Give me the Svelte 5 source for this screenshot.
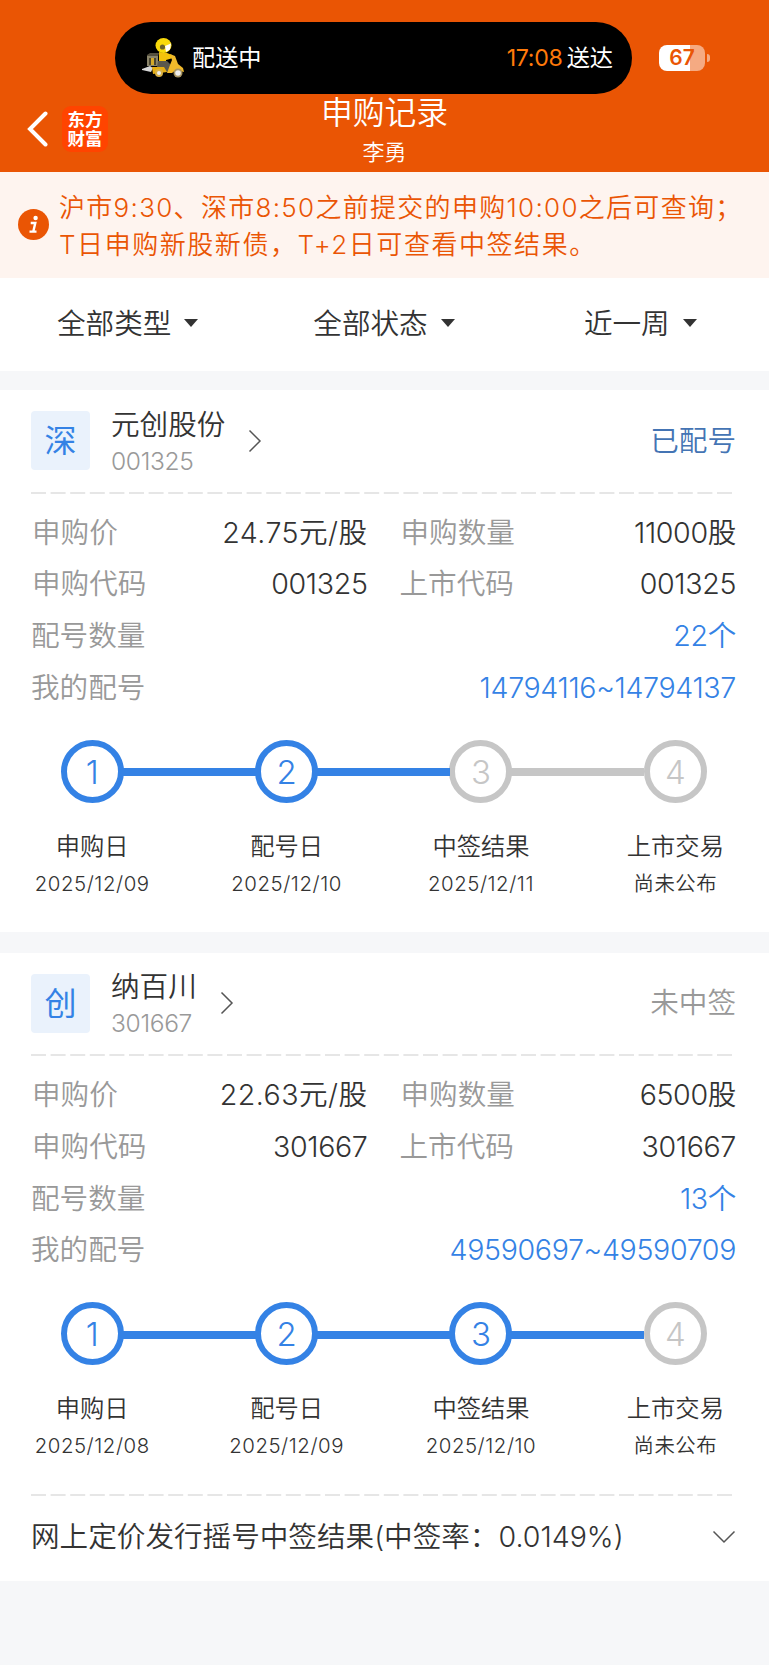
<script lang="ts">
  interface Step {
    title: string;
    date: string;
    done: boolean;
  }

  interface Subscription {
    market: string;
    name: string;
    code: string;
    status: string;
    allotted: boolean;
    price: string;
    quantity: string;
    count: string;
    numbers: string;
    steps: Step[];
    result?: string;
  }

  const filters = ['全部类型', '全部状态', '近一周'];

  const records: Subscription[] = [
    {
      market: '深',
      name: '元创股份',
      code: '001325',
      status: '已配号',
      allotted: true,
      price: '24.75元/股',
      quantity: '11000股',
      count: '22个',
      numbers: '14794116~14794137',
      steps: [
        { title: '申购日', date: '2025/12/09', done: true },
        { title: '配号日', date: '2025/12/10', done: true },
        { title: '中签结果', date: '2025/12/11', done: false },
        { title: '上市交易', date: '尚未公布', done: false },
      ],
    },
    {
      market: '创',
      name: '纳百川',
      code: '301667',
      status: '未中签',
      allotted: false,
      price: '22.63元/股',
      quantity: '6500股',
      count: '13个',
      numbers: '49590697~49590709',
      steps: [
        { title: '申购日', date: '2025/12/08', done: true },
        { title: '配号日', date: '2025/12/09', done: true },
        { title: '中签结果', date: '2025/12/10', done: true },
        { title: '上市交易', date: '尚未公布', done: false },
      ],
      result: '网上定价发行摇号中签结果(中签率：0.0149%)',
    },
  ];
</script>

{#snippet dashes()}
  <svg class="dashes" width="704" height="2" viewBox="0 0 704 2">
    <line x1="0" y1="1" x2="701" y2="1" stroke="#dedede" stroke-width="1.3" stroke-dasharray="15 4.6" />
  </svg>
{/snippet}

<header>
  <div class="status-bar">
    <div class="island">
      <svg class="rider" width="42" height="40" viewBox="0 0 42 40">
        <path d="M0 31l8-3 3 2-2 4-9-2z" fill="#d8d8d8" />
        <path d="M5 17l3-2h9l-1 3v10H5z" fill="#55503f" />
        <path d="M5 18h11v10H5z" fill="#8a846a" />
        <path d="M7 20h7v7H7z" fill="#4a4532" />
        <path d="M9 20h3v7H9z" fill="#d3a92a" />
        <path d="M17 14l8 1 5 2 1 3-7 2v3l-7-1z" fill="#f3c20c" />
        <path d="M16 23l9 0 4 4 1 8-6-1-3-4-6-1z" fill="#5b584c" />
        <path d="M10 29h12l3 5-14 2z" fill="#e5ae13" />
        <path d="M28 16l5 2 3 8 5 4 1 4-8-2-4 3-5 0 3-8 2-5z" fill="#f0b92b" />
        <circle cx="17" cy="35" r="4" fill="#d9b145" />
        <circle cx="17" cy="35" r="2" fill="#eee" />
        <circle cx="36" cy="35" r="4.5" fill="#a89563" />
        <circle cx="36" cy="35" r="2.8" fill="#eee" />
        <ellipse cx="21.5" cy="7.5" rx="8" ry="7.5" fill="#f8d90b" />
        <path d="M23 8l6-2.5-1 6-4 2.5z" fill="#fff" />
        <circle cx="20.5" cy="9" r="2.6" fill="#6b602a" />
      </svg>
      <span class="island-state">配送中</span>
      <span class="island-time">17:08</span>
      <span class="island-label">送达</span>
    </div>
    <div class="battery">
      <div class="battery-body">67</div>
      <div class="battery-cap"></div>
    </div>
  </div>
  <div class="nav">
    <div class="nav-left">
      <svg width="21" height="36" viewBox="0 0 21 36">
        <path d="M18.5 2.5L3 18l15.5 15.5" fill="none" stroke="#fff" stroke-width="4" stroke-linecap="round" />
      </svg>
      <div class="logo">
        <span>东方</span>
        <span>财富</span>
      </div>
    </div>
    <div class="nav-title">
      <h1>申购记录</h1>
      <p>李勇</p>
    </div>
  </div>
</header>

<div class="notice">
  <svg width="31" height="31" viewBox="0 0 31 31">
    <circle cx="15.5" cy="15.5" r="15.5" fill="#ea5504" />
    <circle cx="17.6" cy="9" r="2.2" fill="#fff" />
    <path d="M12.7 14h4.6l-2 8.5M11.5 22.6h7" fill="none" stroke="#fff" stroke-width="2.4" />
  </svg>
  <div class="notice-text">
    <p>沪市9:30、深市8:50之前提交的申购10:00之后可查询；</p>
    <p class="second">T日申购新股新债，T+2日可查看中签结果。</p>
  </div>
</div>

<nav class="filters">
  {#each filters as filter}
    <div class="filter"><span>{filter}</span><span class="caret"></span></div>
  {/each}
</nav>

{#each records as record}
  <section class="card">
    <div class="card-head">
      <div class="market">{record.market}</div>
      <div class="stock">
        <h2>{record.name}</h2>
        <span>{record.code}</span>
      </div>
      <svg class="go" width="14" height="24" viewBox="0 0 14 24">
        <path d="M1.5 1.5L12 12 1.5 22.5" fill="none" stroke="#555" stroke-width="1.5" />
      </svg>
      <div class="status" class:allotted={record.allotted}>{record.status}</div>
    </div>
    {@render dashes()}

    <dl class="details">
      <div><dt class="inset">申购价</dt><dd class="price">{record.price}</dd></div>
      <div><dt class="inset">申购数量</dt><dd>{record.quantity}</dd></div>
      <div><dt class="inset">申购代码</dt><dd>{record.code}</dd></div>
      <div><dt>上市代码</dt><dd>{record.code}</dd></div>
      <div class="wide"><dt>配号数量</dt><dd class="blue">{record.count}</dd></div>
      <div class="wide"><dt>我的配号</dt><dd class="blue">{record.numbers}</dd></div>
    </dl>

    <ol class="steps">
      {#each record.steps as step, i}
        <li class:done={step.done} class:joined={record.steps[i - 1]?.done}>
          <div class="track"><span class="ring">{i + 1}</span></div>
          <strong>{step.title}</strong>
          <time>{step.date}</time>
        </li>
      {/each}
    </ol>

    {#if record.result}
      {@render dashes()}
      <div class="result">
        <span>{record.result}</span>
        <svg width="24" height="14" viewBox="0 0 24 14">
          <path d="M1.5 1.5L12 12 22.5 1.5" fill="none" stroke="#555" stroke-width="1.5" />
        </svg>
      </div>
    {/if}
  </section>
{/each}

<style>
  :global(body) {
    background: #f6f7f9;
    color: #333;
    font-family: Inter, 'Noto Sans CJK SC', sans-serif;
    font-size: 28.6px;
    font-weight: 350;
  }

  h1,
  h2,
  p,
  dl,
  dd,
  ol {
    margin: 0;
    padding: 0;
    font-weight: inherit;
  }

  header {
    height: 172px;
    background: #ea5504;
    color: #fff;
  }

  .status-bar {
    display: flex;
    align-items: center;
    height: 72px;
    padding: 22px 0 0 115px;
  }

  .island {
    box-sizing: border-box;
    display: flex;
    align-items: center;
    width: 517px;
    height: 72px;
    padding: 0 19px 0 27px;
    border-radius: 36px;
    background: #000;
    font-size: 23.2px;
    font-weight: 400;
  }

  .island span {
    line-height: 36px;
  }

  .island-state {
    margin-left: 8px;
  }

  .island-time {
    margin-left: auto;
    color: #ff7a0a;
    letter-spacing: -0.3px;
  }

  .island-label {
    margin-left: 4px;
  }

  .battery {
    display: flex;
    align-items: center;
    gap: 2px;
    margin-left: 27px;
    margin-top: -1px;
  }

  .battery-body {
    width: 46px;
    height: 26px;
    border-radius: 8px;
    background: linear-gradient(90deg, #fff 67%, #f5aa82 67%);
    color: #ea5504;
    font-size: 21px;
    font-weight: 600;
    line-height: 26px;
    text-align: center;
  }

  .battery-cap {
    width: 3px;
    height: 8px;
    border-radius: 0 4px 4px 0;
    background: #f5aa82;
  }

  .nav {
    display: grid;
    grid-template-columns: 1fr auto 1fr;
    height: 78px;
  }

  .nav-left {
    display: flex;
    align-items: center;
    gap: 14px;
    height: 46px;
    padding: 12px 0 0 27px;
  }

  .logo {
    display: flex;
    flex-direction: column;
    align-items: center;
    justify-content: center;
    width: 46px;
    height: 46px;
    border-radius: 9px;
    background: #ff4400;
    font-size: 17.5px;
    font-weight: 700;
    line-height: 19px;
  }

  .nav-title {
    text-align: center;
  }

  .nav-title h1 {
    font-size: 31.8px;
    line-height: 38px;
  }

  .nav-title p {
    margin-top: 1px;
    font-size: 22px;
    line-height: 38px;
  }

  .notice {
    display: flex;
    align-items: center;
    gap: 10px;
    height: 105.5px;
    padding-left: 18px;
    background: #fef4ef;
    color: #ea5504;
    font-size: 26px;
    letter-spacing: 1.3px;
    line-height: 37.5px;
    white-space: nowrap;
  }

  .notice-text {
    padding-top: 3px;
  }

  .second {
    letter-spacing: 1.55px;
  }

  .filters {
    display: grid;
    grid-template-columns: repeat(3, 1fr);
    height: 93px;
    background: #fff;
    line-height: 36px;
  }

  .filter {
    display: flex;
    align-items: center;
    justify-content: center;
    gap: 13px;
    padding-right: 1px;
  }

  .filter span:first-child {
    padding-bottom: 1px;
  }

  .caret {
    border: 7px solid transparent;
    border-top: 8px solid #333;
    border-bottom: 0;
    margin-bottom: 2px;
  }

  .card {
    margin-top: 19.5px;
    padding: 0 33px 0 31px;
    background: #fff;
  }

  .card + .card {
    margin-top: 21px;
  }

  .card-head {
    display: flex;
    align-items: center;
    height: 101.5px;
  }

  .market {
    width: 59px;
    height: 59px;
    border-radius: 4px;
    background: #eaf2fc;
    color: #3482e5;
    font-size: 32px;
    line-height: 60px;
    text-align: center;
    font-weight: 400;
  }

  .stock {
    margin-left: 21px;
    padding-top: 4px;
  }

  .stock h2 {
    font-size: 28.6px;
    line-height: 36px;
  }

  .stock span {
    display: block;
    color: #999;
    font-size: 24.6px;
    line-height: 36px;
    letter-spacing: -0.35px;
  }

  .go {
    margin-left: 23px;
  }

  .status {
    margin-left: auto;
    color: #999;
    line-height: 36px;
  }

  .status.allotted {
    color: #4474b4;
  }

  .dashes {
    display: block;
  }

  .details {
    display: grid;
    grid-template-columns: 336.5px 336.5px;
    column-gap: 32px;
    padding-top: 13px;
    line-height: 51.7px;
  }

  .details div {
    display: flex;
    justify-content: space-between;
  }

  .details .wide {
    grid-column: 1 / -1;
  }

  dt {
    color: #999;
  }

  .inset {
    padding-left: 1px;
  }

  dd {
    letter-spacing: -0.35px;
  }

  dd.price {
    letter-spacing: 0.45px;
  }

  .blue {
    color: #3482e5;
  }

  .steps {
    display: grid;
    grid-template-columns: repeat(4, 194.4px);
    margin: 26.5px 0 0 -36px;
    list-style: none;
  }

  .steps li {
    display: flex;
    flex-direction: column;
    align-items: center;
    white-space: nowrap;
  }

  .track {
    position: relative;
    display: flex;
    justify-content: center;
    width: 100%;
    height: 63px;
  }

  /* connector to the previous step */
  li:not(:first-child) .track::before {
    content: '';
    position: absolute;
    top: 28.5px;
    right: calc(50% + 31px);
    width: 133px;
    height: 8px;
    background: #c6c6c6;
  }

  li.joined:not(:first-child) .track::before {
    background: #3482e5;
  }

  .ring {
    box-sizing: border-box;
    width: 63px;
    height: 63px;
    border: 6px solid #c6c6c6;
    border-radius: 50%;
    color: #c6c6c6;
    font-size: 33px;
    font-weight: 300;
    line-height: 52px;
    text-align: center;
  }

  .done .ring {
    border-color: #3482e5;
    color: #3482e5;
  }

  .steps strong {
    margin-top: 25px;
    font-size: 24.3px;
    font-weight: inherit;
    line-height: 37px;
  }

  .steps time {
    height: 66.8px;
    font-size: 20.4px;
    line-height: 37px;
    letter-spacing: 0.55px;
  }

  .result {
    display: flex;
    align-items: center;
    justify-content: space-between;
    height: 84.5px;
    line-height: 36px;
  }

  .result span {
    padding-bottom: 3px;
  }

  .result svg {
    margin-bottom: 2px;
  }
</style>
